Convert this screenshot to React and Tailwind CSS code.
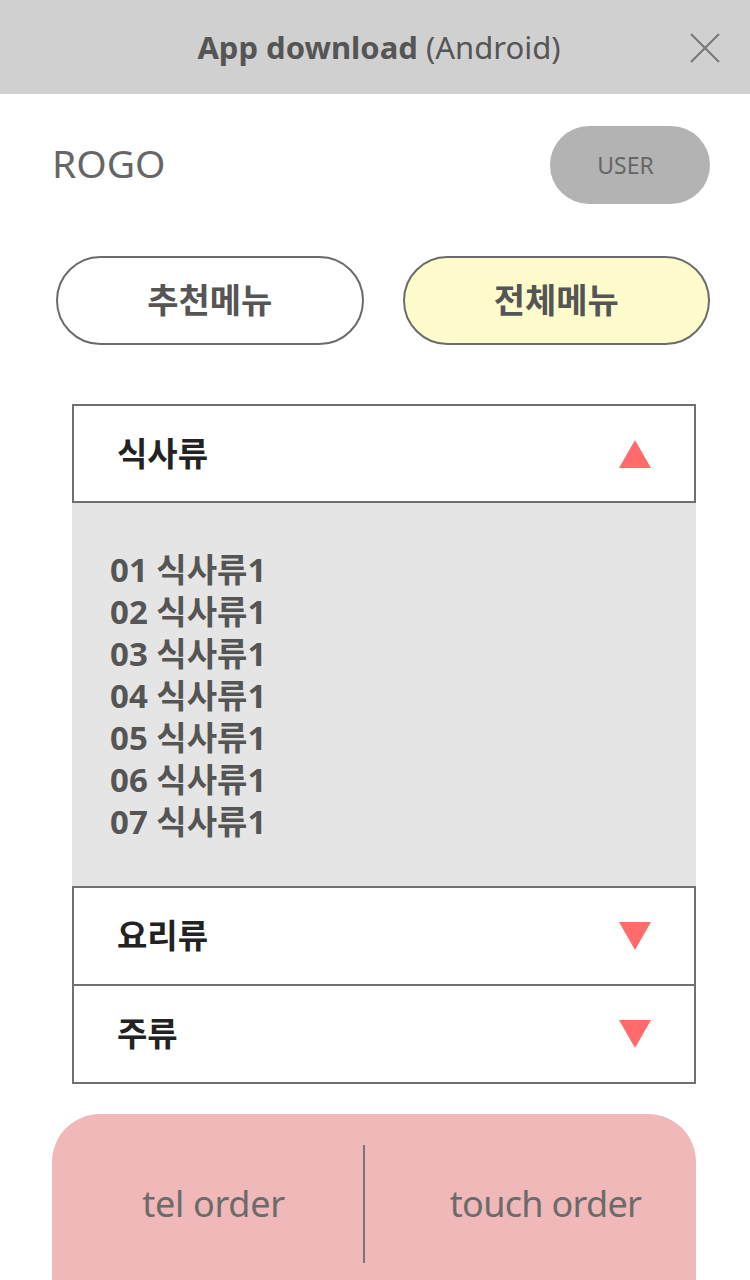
import React from "react";

const FONT = { fontFamily: '"Noto Sans", "Noto Sans CJK KR", sans-serif' };

const ITEMS = ["01", "02", "03", "04", "05", "06", "07"];

function Triangle({ up }) {
  return (
    <svg width="32" height="28" viewBox="0 0 32 28" className="shrink-0">
      {up ? (
        <polygon points="16,0 32,28 0,28" fill="#ff6b6b" />
      ) : (
        <polygon points="0,0 32,0 16,28" fill="#ff6b6b" />
      )}
    </svg>
  );
}

function AccordionRow({ title, open, className = "" }) {
  return (
    <div className={`flex items-center justify-between pl-[43px] pr-[43px] ${className}`}>
      <span className="text-[33px] font-bold text-[#222]">{title}</span>
      <Triangle up={open} />
    </div>
  );
}

export default function App() {
  return (
    <div className="w-[750px] h-[1280px] overflow-hidden bg-white" style={FONT}>
      {/* top bar */}
      <div className="relative flex h-[94px] items-center justify-center bg-[#d0d0d0]">
        <p className="pl-[8px] text-[31px] text-[#555]">
          <span className="font-bold">App download</span> (Android)
        </p>
        <svg className="absolute right-[30px] top-[33px]" width="30" height="30" viewBox="0 0 30 30">
          <path d="M1 1 L29 29 M29 1 L1 29" stroke="#777" strokeWidth="2" fill="none" />
        </svg>
      </div>

      {/* header */}
      <div className="flex items-center justify-between pl-[52px] pr-[40px] pt-[32px]">
        <span className="-mt-[4px] text-[39px] text-[#666]">ROGO</span>
        <button className="flex h-[78px] w-[160px] items-center justify-center rounded-full bg-[#b3b3b3] pr-[9px] text-[23px] text-[#666]">
          USER
        </button>
      </div>

      {/* menu tabs */}
      <div className="flex gap-[39px] pl-[56px] pr-[40px] pt-[52px]">
        <button className="flex h-[89px] flex-1 items-center justify-center rounded-full border-2 border-[#6b6b6b] bg-white text-[34px] font-bold text-[#555]">
          추천메뉴
        </button>
        <button className="flex h-[89px] flex-1 items-center justify-center rounded-full border-2 border-[#6b6b6b] bg-[#fefccc] text-[34px] font-bold text-[#555]">
          전체메뉴
        </button>
      </div>

      {/* accordion */}
      <div className="ml-[72px] mt-[59px] w-[624px]">
        <div className="border-2 border-[#707070]">
          <AccordionRow title="식사류" open className="h-[95px]" />
        </div>
        <div className="h-[383px] bg-[#e5e5e5] pl-[38px] pt-[46px]">
          {ITEMS.map((n) => (
            <p key={n} className="text-[33px] font-bold leading-[42px] text-[#555]">
              {n} 식사류1
            </p>
          ))}
        </div>
        <div className="border-2 border-[#707070]">
          <AccordionRow title="요리류" className="h-[96px]" />
          <div className="border-t-2 border-[#707070]" />
          <AccordionRow title="주류" className="h-[96px]" />
        </div>
      </div>

      {/* order bar */}
      <div className="ml-[52px] mt-[30px] flex h-[200px] w-[644px] items-start rounded-t-[48px] bg-[#f0b8b8] pt-[31px]">
        <div className="flex h-[118px] w-[311px] items-center justify-center pl-[12px] text-[36px] text-[#6b6b6b] tracking-[-0.3px]">
          tel order
        </div>
        <div className="h-[118px] w-[2px] bg-[#777]" />
        <div className="flex h-[118px] flex-1 items-center justify-center pl-[30px] text-[36px] text-[#6b6b6b] tracking-[-0.7px]">
          touch order
        </div>
      </div>
    </div>
  );
}
